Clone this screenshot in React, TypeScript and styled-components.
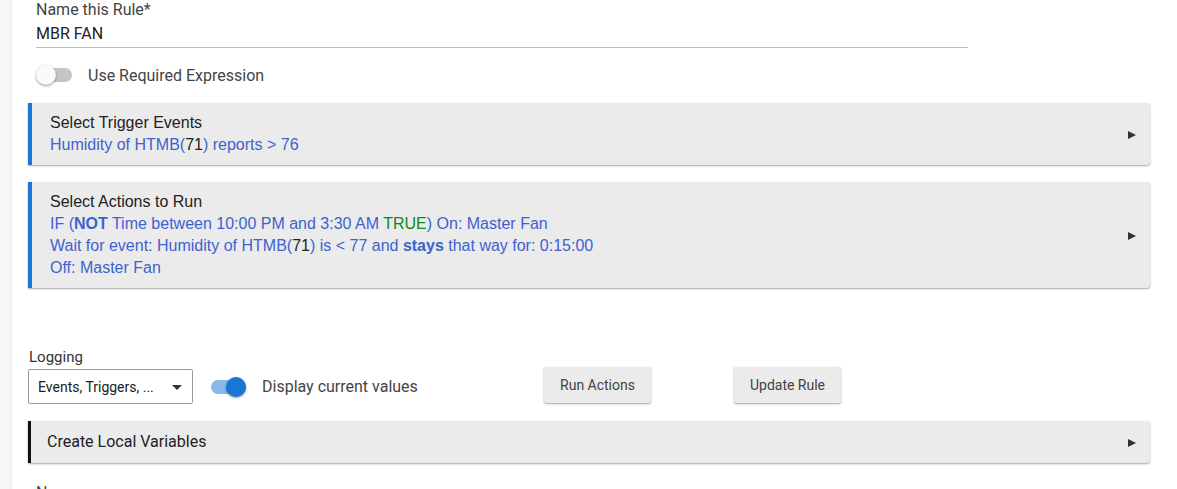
import React from "react";
import styled, { createGlobalStyle } from "styled-components";

const Global = createGlobalStyle`
  html, body { margin: 0; padding: 0; background: #fff; }
  body { font-family: Roboto, "Liberation Sans", Arial, sans-serif; overflow: hidden; }
`;

const Page = styled.div`
  display: flex;
  min-height: 489px;
`;

const Gutter = styled.div`
  flex: 0 0 11px;
  background: #f6f6f6;
  border-right: 1px solid #ebebeb;
`;

const Content = styled.main`
  flex: 1;
  padding: 0 27px 0 16px;
  display: flex;
  flex-direction: column;
`;

const Field = styled.div`
  margin-left: 8px;
  width: 932px;
  display: flex;
  flex-direction: column;
`;

const FieldLabel = styled.label`
  font: 16px/19px Roboto, sans-serif;
  color: #444;
`;

const FieldInput = styled.div`
  margin-top: 5px;
  font: 16px/19px Roboto, sans-serif;
  color: #222;
  padding-bottom: 4px;
  border-bottom: 1px solid #bdbdbd;
`;

const SwitchRow = styled.div<{ $indent?: number; $mt?: number }>`
  display: flex;
  align-items: center;
  gap: 16px;
  margin-left: ${(p) => p.$indent ?? 0}px;
  margin-top: ${(p) => p.$mt ?? 0}px;
`;

const SwitchBox = styled.div<{ $on?: boolean }>`
  position: relative;
  width: 36px;
  height: 20px;
  flex: 0 0 36px;
  &::before {
    content: "";
    position: absolute;
    left: 1px;
    top: 3px;
    width: 35px;
    height: 14px;
    border-radius: 7px;
    background: ${(p) => (p.$on ? "#8ab8e8" : "#c6c6c6")};
  }
  &::after {
    content: "";
    position: absolute;
    top: 0;
    left: ${(p) => (p.$on ? "16px" : "0")};
    width: 20px;
    height: 20px;
    border-radius: 50%;
    background: ${(p) => (p.$on ? "#1976d2" : "#fafafa")};
    box-shadow: 0 1px 3px rgba(0, 0, 0, 0.3), 0 1px 1px rgba(0, 0, 0, 0.14);
  }
`;

const SwitchLabel = styled.span`
  font: 16px/19px Roboto, sans-serif;
  color: #444;
`;

const Card = styled.section<{ $accent: string; $bar: number; $mt?: number }>`
  position: relative;
  background: #ebebeb;
  border-left: ${(p) => p.$bar}px solid ${(p) => p.$accent};
  box-shadow: 0 1px 2px rgba(0, 0, 0, 0.35), 0 0 1px rgba(0, 0, 0, 0.08);
  border-radius: 0 3px 3px 0;
  padding: 9px 40px 9px 18px;
  margin-top: ${(p) => p.$mt ?? 0}px;
`;

const CardTitle = styled.div`
  font: 16px/22px "Liberation Sans", Arial, sans-serif;
  color: #222;
`;

const CardLine = styled.div`
  font: 16px/22px "Liberation Sans", Arial, sans-serif;
  color: #3d62cf;
  b { font-weight: bold; }
`;

const Dark = styled.span`
  color: #222;
`;

const Green = styled.span`
  color: #118811;
`;

const Arrow = styled.span`
  position: absolute;
  right: 14px;
  top: 50%;
  margin-top: -3px;
  width: 0;
  height: 0;
  border-top: 4px solid transparent;
  border-bottom: 4px solid transparent;
  border-left: 8px solid #333;
`;

const PlainCard = styled.section`
  position: relative;
  background: #ebebeb;
  border-left: 3px solid #111;
  box-shadow: 0 1px 2px rgba(0, 0, 0, 0.35), 0 0 1px rgba(0, 0, 0, 0.08);
  border-radius: 0 3px 3px 0;
  padding: 11px 40px 12px 16px;
  margin-top: 17px;
  font: 16px/19px Roboto, sans-serif;
  color: #222;
`;

const ControlsRow = styled.div`
  display: flex;
  align-items: flex-end;
  margin-top: 60px;
`;

const SelectGroup = styled.div`
  display: flex;
  flex-direction: column;
`;

const SmallLabel = styled.label`
  font: 15px/18px Roboto, sans-serif;
  color: #333;
  margin-left: 1px;
  margin-bottom: 3px;
`;

const Select = styled.div`
  box-sizing: border-box;
  width: 165px;
  height: 35px;
  border: 1px solid #9a9a9a;
  border-radius: 2px;
  display: flex;
  align-items: center;
  justify-content: space-between;
  padding: 0 10px 0 9px;
  font: 14px/16px Roboto, sans-serif;
  color: #222;
`;

const Caret = styled.span`
  width: 0;
  height: 0;
  border-left: 5px solid transparent;
  border-right: 5px solid transparent;
  border-top: 5px solid #333;
  margin-top: 2px;
`;

const SwitchGroup = styled.div`
  flex: 0 0 334px;
  height: 35px;
  display: flex;
  align-items: center;
  margin-left: 17px;
`;

const Button = styled.button<{ $ml?: number }>`
  width: 107px;
  height: 36px;
  margin-left: ${(p) => p.$ml ?? 0}px;
  margin-bottom: 1px;
  border: none;
  border-radius: 2px;
  background: #ebebeb;
  box-shadow: 0 1px 2px rgba(0, 0, 0, 0.35), 0 0 1px rgba(0, 0, 0, 0.1);
  font: 14px/16px Roboto, sans-serif;
  color: #444;
  padding: 0;
`;

const NextLabel = styled.div`
  margin: 20px 0 0 8px;
  font: 16px/19px Roboto, sans-serif;
  color: #444;
`;

export default function App() {
  return (
    <>
      <Global />
      <Page>
        <Gutter />
        <Content>
          <Field>
            <FieldLabel>Name this Rule*</FieldLabel>
            <FieldInput>MBR FAN</FieldInput>
          </Field>

          <SwitchRow $indent={8} $mt={17}>
            <SwitchBox />
            <SwitchLabel>Use Required Expression</SwitchLabel>
          </SwitchRow>

          <Card $accent="#1976d2" $bar={4} $mt={18}>
            <CardTitle>Select Trigger Events</CardTitle>
            <CardLine>
              Humidity of HTMB(<Dark>71</Dark>) reports &gt; 76
            </CardLine>
            <Arrow />
          </Card>

          <Card $accent="#1976d2" $bar={4} $mt={17}>
            <CardTitle>Select Actions to Run</CardTitle>
            <CardLine>
              IF (<b>NOT</b> Time between 10:00 PM and 3:30 AM <Green>TRUE</Green>) On: Master Fan
            </CardLine>
            <CardLine>
              Wait for event: Humidity of HTMB(<Dark>71</Dark>) is &lt; 77 and <b>stays</b> that way for: 0:15:00
            </CardLine>
            <CardLine>Off: Master Fan</CardLine>
            <Arrow />
          </Card>

          <ControlsRow>
            <SelectGroup>
              <SmallLabel>Logging</SmallLabel>
              <Select>
                <span>Events, Triggers, ...</span>
                <Caret />
              </Select>
            </SelectGroup>
            <SwitchGroup>
              <SwitchRow>
                <SwitchBox $on />
                <SwitchLabel>Display current values</SwitchLabel>
              </SwitchRow>
            </SwitchGroup>
            <Button>Run Actions</Button>
            <Button $ml={83}>Update Rule</Button>
          </ControlsRow>

          <PlainCard>
            Create Local Variables
            <Arrow />
          </PlainCard>

          <NextLabel>Name</NextLabel>
        </Content>
      </Page>
    </>
  );
}
